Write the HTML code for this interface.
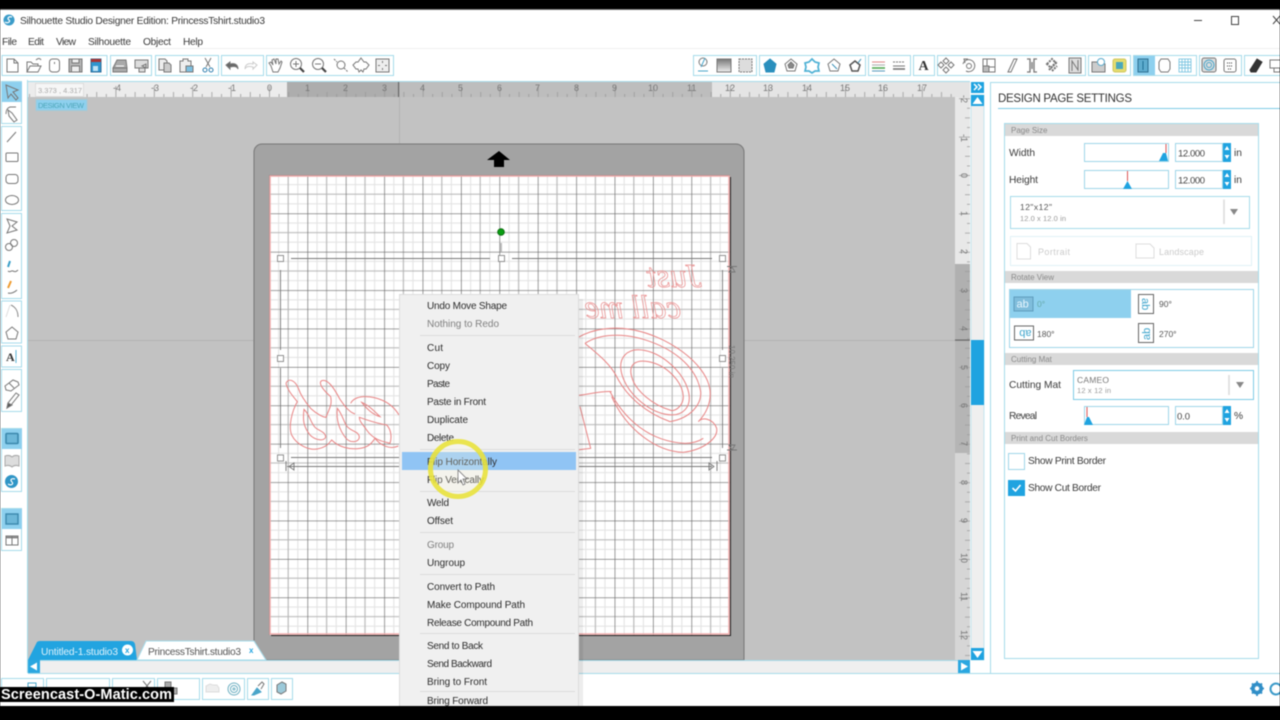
<!DOCTYPE html>
<html>
<head>
<meta charset="utf-8">
<title>Silhouette Studio</title>
<style>
html,body{margin:0;padding:0;background:#000;width:1280px;height:720px;overflow:hidden}
svg{display:block;position:absolute;left:0;top:0;filter:blur(.45px)}
text{font-family:"Liberation Sans",sans-serif;font-size:10.2px;fill:#3a3a3a}
.m text{font-size:10px;fill:#2c2c2c}
.i{fill:none;stroke:#777;stroke-width:1}
.b{fill:none;stroke:#a6dbea;stroke-width:1}
.h{fill:#d9d9d9}
.hd{font-size:8px;fill:#8a8a8a}
.rl{font-size:9px;fill:#777}
.art{fill:none;stroke:#e88484;stroke-width:3}
</style>
</head>
<body>
<svg width="1280" height="720" viewBox="0 0 1280 720" xmlns="http://www.w3.org/2000/svg">
<defs>
<pattern id="g" patternUnits="userSpaceOnUse" x="269" y="175" width="38.4" height="38.4">
<rect width="38.4" height="38.4" fill="#fff"/>
<path d="M9.6 0V38.4M28.8 0V38.4M0 9.6H38.4M0 28.8H38.4" stroke="#e2e2e2" stroke-width="1"/>
<path d="M19.2 0V38.4M0 19.2H38.4" stroke="#b4b4b4" stroke-width="1.100"/>
<path d="M0 0V38.4M0 0H38.4" stroke="#686868" stroke-width="1.300"/>
</pattern>
<pattern id="rt" patternUnits="userSpaceOnUse" x="269" y="82" width="38.4" height="15">
<path d="M.5 4V15M19.7 10V15M10.1 12V15M29.3 12V15" stroke="#999" stroke-width=".8"/>
</pattern>
<pattern id="rv" patternUnits="userSpaceOnUse" x="955" y="175" width="15" height="38.4">
<path d="M4 .5H15M10 19.7H15M12 10.1H15M12 29.3H15" stroke="#999" stroke-width=".8"/>
</pattern>
<linearGradient id="wg" x1="0" y1="0" x2="0" y2="1"><stop offset="0" stop-color="#777"/><stop offset="1" stop-color="#eee"/></linearGradient>
</defs>

<rect width="1280" height="720" fill="#000"/>
<rect y="9" width="1280" height="697" fill="#fff"/>
<rect y="9" width="1280" height="1" fill="#777"/>

<!-- title bar -->
<circle cx="9" cy="20" r="5.5" fill="#3b9cc9"/>
<path d="M5 22c3 2 6-1 4-2s-1-4 3-3" fill="none" stroke="#fff" stroke-width="1.2"/>
<text x="20" y="24" textLength="245">Silhouette Studio Designer Edition: PrincessTshirt.studio3</text>
<path d="M1194 20.5h8" stroke="#444"/>
<rect x="1231.5" y="16.5" width="7" height="8" fill="none" stroke="#444"/>
<path d="M1273 16l7 8M1280 16l-7 8" stroke="#444"/>
<text x="2" y="45" textLength="15">File</text>
<text x="28" y="45" textLength="16">Edit</text>
<text x="56" y="45" textLength="20">View</text>
<text x="88" y="45" textLength="43">Silhouette</text>
<text x="143" y="45" textLength="28">Object</text>
<text x="183" y="45" textLength="20">Help</text>
<rect y="48" width="1280" height="1" fill="#f0f0f0"/>

<!-- top toolbar groups -->
<g class="b">
<rect x="2" y="55.5" width="105" height="20"/><rect x="110.5" y="55.5" width="41" height="20"/><rect x="155.5" y="55.5" width="63" height="20"/><rect x="221.5" y="55.5" width="42" height="20"/><rect x="266.5" y="55.5" width="127" height="20"/>
<rect x="693.5" y="55.5" width="63" height="20"/><rect x="759.5" y="55.5" width="106" height="20"/><rect x="868.5" y="55.5" width="42" height="20"/><rect x="913.5" y="55.5" width="21" height="20"/><rect x="937.5" y="55.5" width="148" height="20"/><rect x="1088.5" y="55.5" width="42" height="20"/><rect x="1133.5" y="55.5" width="63" height="20"/><rect x="1199.5" y="55.5" width="42" height="20"/><rect x="1244.5" y="55.5" width="40" height="20"/>
</g>
<rect x="1134" y="56" width="21" height="19" fill="#8ed0ee"/>

<!-- left toolbar icons -->
<g class="i">
<path d="M7 59h7l4 4v9H7zM14 59v4h4"/>
<path d="M27 72V62h4l2 2h5v2M27 72l3-6h11l-3 6zM36 60c2-2 4-2 5 0"/>
<rect x="49.500" y="59" width="10" height="13" rx="3"/><path d="M54.500 62v2"/>
<rect x="69" y="59" width="13" height="13" fill="#b5b5b5"/><rect x="72" y="59" width="7" height="4" fill="#eee"/><rect x="71.500" y="66" width="8" height="6" fill="#eee"/>
<rect x="91" y="59" width="10" height="13" fill="#2f95cf" stroke="#2f6f99"/><rect x="91" y="59" width="10" height="3" fill="#a33" stroke="none"/><rect x="93" y="66" width="5" height="5" fill="#bfe3f5" stroke="none"/>
<path d="M113 68l4-8h9l1 8zM113 68v4h14v-4" fill="#aaa"/><path d="M116 66h8" stroke="#fff"/>
<path d="M135 60h13v8h-13zM139 68h6v4h-6zM142 66l4-2v4z" fill="#ddd"/>
<path d="M159 59h6l2 2v9h-8z" fill="#eee"/><path d="M164 63h5l2 2v7h-7z" fill="#ccc"/>
<path d="M180 61h3v-2h5v2h3v11h-11z" fill="#eee"/><rect x="186" y="66" width="7" height="6" fill="#7dbfe0"/>
<path d="M205 58l5 9M211 58l-5 9"/><circle cx="205" cy="70" r="2" stroke="#2f7fae"/><circle cx="211" cy="70" r="2" stroke="#2f7fae"/>
<path d="M226 65l4-3v2c4-1 8 0 8 5-1-3-4-3-8-2v2z" fill="#666"/>
<path d="M257 65l-4-3v2c-4-1-8 0-8 5 1-3 4-3 8-2v2z" stroke="#ccc"/>
<path d="M271 66l-2-3 2-1 2 3-1-5 2-1 2 5 0-5 2 0 1 5 2-3 1 1-2 6-2 4h-5z"/>
<circle cx="296" cy="64" r="5.500"/><path d="M293 64h6M296 61v6"/><path d="M300 68l4 4" stroke-width="2.200" stroke="#444"/>
<circle cx="318" cy="64" r="5.500"/><path d="M315 64h6"/><path d="M322 68l4 4" stroke-width="2.200" stroke="#444"/>
<circle cx="341" cy="65" r="4"/><path d="M334 59l3 3M344 68l4 4" stroke-dasharray="2 1"/>
<path d="M361 58l3 4h2l3 3-3 4h-2l-1 3-2-2-2 2-1-3h-2l-3-4 3-3h2z"/>
<rect x="376" y="59" width="13" height="13" fill="#eee"/><path d="M382.500 61v2M382.500 68v2M378 65.500h2M385 65.500h2"/>
</g>

<!-- right toolbar icons -->
<g class="i">
<circle cx="703" cy="62" r="4"/><path d="M701 67l4-9M698 71h10" stroke="#4aa5c9"/>
<rect x="717" y="59" width="14" height="13" fill="url(#wg)"/>
<rect x="739" y="59" width="13" height="13" stroke-dasharray="2 1" fill="#ddd"/>
<path d="M770 59l6 5-2 8h-8l-2-8z" fill="#2a8fbd" stroke="#2a8fbd"/>
<path d="M791 59l6 5-2 7h-8l-2-7z"/><path d="M791 62l3 3-1 3h-4l-1-3z" fill="#888"/>
<path d="M812 59l3 3 4 1-1 4 1 4-4 0-3 2-3-2-4 0 1-4-1-4 4-1z" stroke="#4fb2d5" stroke-width="1.700"/>
<path d="M834 59l6 5-2 7h-8l-2-7z"/><path d="M832 64l5 5" stroke="#3a8fb5"/>
<path d="M855 61l5 4-2 6h-6l-2-6z" stroke="#555" stroke-width="1.500"/><path d="M858 63l3-4" stroke="#3a8fb5"/>
<path d="M872 62h13" stroke="#d88"/><path d="M872 65h13" stroke="#aaa"/><path d="M872 68h13" stroke="#5a5" stroke-width="1.600"/><path d="M872 71h13" stroke="#59b"/>
<path d="M893 62h12" stroke-dasharray="2 1"/><path d="M893 66h12"/><path d="M893 69h12" stroke-width="1.600"/>
<path d="M946 58l3 3-3 3-3-3zM946 67l3 3-3 3-3-3zM941 62l3 3-3 3-3-3zM951 62l3 3-3 3-3-3z"/>
<path d="M963 64a6 6 0 1 1 3 7M968 59l-4 0 1 4"/><circle cx="969" cy="66" r="2.500"/>
<rect x="983" y="59" width="12" height="13"/><rect x="987" y="59" width="8" height="8"/><rect x="983" y="66" width="6" height="6" fill="#bbb"/>
<path d="M1008 72l6-13h3l-6 13z"/>
<path d="M1027 59h3v13h-3M1037 59h-3v13h3M1032 62v7" stroke-width="1.300"/>
<path d="M1049 70l8-9M1047 64l5-5 4 4-5 5zM1052 71l5-5" stroke-width="2" stroke-dasharray="2 1"/>
<rect x="1069" y="58" width="12" height="15" fill="#ddd"/><path d="M1072 71V61l6 9V60"/>
<path d="M1092 62h6l1 2h6v8h-13z" fill="#ccc"/><circle cx="1101" cy="62" r="3.500" fill="#fff" stroke="#5aa9cb"/>
<rect x="1113" y="59" width="13" height="13" rx="2" fill="#e5dc6e" stroke="#cfc760"/><rect x="1116" y="62" width="7" height="7" fill="#4aa8bb" stroke="none"/>
<path d="M1138 59h10v13h-10z" fill="#5eaccf" stroke="#2f6f90"/><path d="M1143 61v9" stroke="#1f6f95"/>
<path d="M1161 59h7l2 3v7l-2 3h-7l-2-3v-7z"/>
<g stroke="#7fc7e2" stroke-width=".9"><rect x="1179" y="59" width="12" height="13"/><path d="M1182 59v13M1185 59v13M1188 59v13M1179 62h12M1179 65h12M1179 68h12"/></g>
<rect x="1202" y="58" width="14" height="14" rx="2" fill="#ddd"/><circle cx="1209" cy="65" r="5" stroke="#4aa5c9"/><circle cx="1209" cy="65" r="2.500" stroke="#4aa5c9"/>
<rect x="1224" y="59" width="12" height="13" rx="2"/><path d="M1227 63h6M1227 66h6M1228 69h4" stroke-dasharray="1 1" stroke="#333"/>
<path d="M1250 70l7-11 5 3-6 10h-5z" fill="#333" stroke="#333"/>
<path d="M1270 60h12v8h-12zM1274 68h6v4h-6z"/>
</g>
<text x="918.500" y="70" style="font-family:'Liberation Serif',serif;font-size:14px;font-weight:bold;fill:#333">A</text>

<!-- side bar -->
<rect x="27" y="80" width="1" height="600" fill="#a6dbea"/>
<rect x="28" y="81" width="942" height="1" fill="#a6dbea"/>
<rect x="1.500" y="81.500" width="20" height="42" class="b"/>
<rect x="2" y="82" width="20" height="20" fill="#8ed0ee"/>
<rect x="1.500" y="126.500" width="20" height="84" class="b"/>
<rect x="1.500" y="213.500" width="20" height="85" class="b"/>
<rect x="1.500" y="301" width="20" height="42" class="b"/>
<rect x="1.500" y="346" width="20" height="21" class="b"/>
<rect x="1.500" y="369.500" width="20" height="42" class="b"/>
<rect x="1.500" y="428.500" width="20" height="63" class="b"/>
<rect x="2" y="429" width="20" height="20" fill="#8ed0ee"/>
<rect x="1.500" y="508.500" width="20" height="42" class="b"/>
<rect x="2" y="509" width="20" height="20" fill="#8ed0ee"/>
<g class="i">
<path d="M6 85l12 5-5 2 5 6-2 2-5-6-3 4z"/>
<path d="M6 114c0-4 1-6 4-7h6M8 110l4 3 5 7-3 2-5-6z"/>
<path d="M7 142l9-10"/>
<rect x="6" y="153" width="12" height="8.500" rx="1"/>
<rect x="6" y="174.500" width="12" height="9" rx="3"/>
<ellipse cx="12" cy="200" rx="6.500" ry="4.500"/>
<path d="M7 219l10 3-5 4 5 4-10 3 3-7z"/>
<circle cx="9" cy="247" r="3.500"/><circle cx="14" cy="243" r="3.500"/>
<path d="M8 271c2 2 3-1 5 0s3 1 5-1"/><path d="M10 261l-2 6" stroke="#3a9fc9" stroke-width="2"/>
<path d="M8 293c3 1 7-1 9-3"/><path d="M11 281l-3 7" stroke="#ee9b2f" stroke-width="2"/>
<path d="M11 305c4 2 7 5 7 12" stroke="#888"/><path d="M6 317l4-12" stroke="#ddd"/>
<path d="M12 327l6 5-2 7h-8l-2-7z"/>
<path d="M5 386l8-6 5 2 1 3-8 6-5-1z"/><path d="M9 383l5 5"/>
<path d="M7 408l1-5 8-10 3 2-8 10z"/><path d="M7 408l1-5 4 2z" fill="#555"/>
<rect x="6" y="433.500" width="12" height="10" rx="1" fill="#6db7d8" stroke="#3b88ad" stroke-width="1.600"/>
<path d="M5 456c3-1 5-1 7 1 2-2 4-2 7-1v10c-3-1-5-1-7 1-2-2-4-2-7-1z" fill="#ddd" stroke="#aaa"/>
<rect x="6" y="514" width="12" height="10" fill="#6db7d8" stroke="#3b88ad" stroke-width="1.400"/>
<rect x="6" y="536" width="12" height="9" /><path d="M12 536v9"/><path d="M6 537.500h12" stroke-width="1.600"/>
</g>
<text x="6" y="361" style="font-family:'Liberation Serif',serif;font-size:12px;font-weight:bold;fill:#333">A</text>
<path d="M16 350v13" stroke="#5ab4d6"/>
<circle cx="11.500" cy="481.500" r="6.500" fill="#2f95c6"/>
<path d="M8 484c3 2 6 0 4-2s-1-4 3-3" fill="none" stroke="#fff" stroke-width="1.200"/>

<!-- canvas -->
<rect x="28" y="82" width="942" height="578" fill="#c2c2c2"/>
<path d="M399.500 97V145M28 340.500H254M744 340.500H955" stroke="#b3b3b3" stroke-width="1"/>

<!-- top ruler -->
<rect x="28" y="82" width="942" height="15" fill="#ececec"/>
<rect x="287" y="82" width="111" height="15" fill="#adadad"/>
<rect x="398" y="82" width="314" height="15" fill="#bdbdbd"/>
<rect x="712" y="82" width="258" height="15" fill="#e4e4e4"/>
<rect x="28" y="82" width="927" height="15" fill="url(#rt)"/>
<rect x="398" y="82" width="1.200" height="15" fill="#666"/>
<g>
<text class="rl" x="113" y="91">-4</text><text class="rl" x="151" y="91">-3</text><text class="rl" x="190" y="91">-2</text><text class="rl" x="228" y="91">-1</text><text class="rl" x="267" y="91">0</text><text class="rl" x="305" y="91">1</text><text class="rl" x="343" y="91">2</text><text class="rl" x="382" y="91">3</text><text class="rl" x="420" y="91">4</text><text class="rl" x="458" y="91">5</text><text class="rl" x="497" y="91">6</text><text class="rl" x="535" y="91">7</text><text class="rl" x="574" y="91">8</text><text class="rl" x="612" y="91">9</text><text class="rl" x="648" y="91">10</text><text class="rl" x="687" y="91">11</text><text class="rl" x="725" y="91">12</text><text class="rl" x="763" y="91">13</text><text class="rl" x="802" y="91">14</text><text class="rl" x="840" y="91">15</text><text class="rl" x="878" y="91">16</text><text class="rl" x="917" y="91">17</text>
</g>
<rect x="35.500" y="83.500" width="48" height="13" fill="#f6f6f6" stroke="#ddd"/>
<text x="38" y="93" style="font-size:7.500px;fill:#aaa" textLength="44">3.373 , 4.317</text>
<rect x="36" y="99.500" width="51" height="11" fill="#8ed0ee" stroke="#a6c9d6"/>
<text x="38" y="108" style="font-size:7.500px;fill:#4da6b8" textLength="46">DESIGN VIEW</text>

<!-- right ruler -->
<rect x="955" y="97" width="15" height="563" fill="#e8e8e8"/>
<rect x="955" y="264" width="15" height="76" fill="#b0b0b0"/>
<rect x="955" y="340" width="15" height="113" fill="#b5b5b5"/>
<rect x="955" y="453" width="15" height="207" fill="#d6d6d6"/>
<rect x="955" y="97" width="15" height="563" fill="url(#rv)"/>
<rect x="955" y="339.500" width="15" height="1.200" fill="#666"/>
<g>
<text class="rl" transform="translate(961 95) rotate(90)">-2</text><text class="rl" transform="translate(961 134) rotate(90)">-1</text><text class="rl" transform="translate(961 173) rotate(90)">0</text><text class="rl" transform="translate(961 211) rotate(90)">1</text><text class="rl" transform="translate(961 249) rotate(90)">2</text><text class="rl" transform="translate(961 288) rotate(90)">3</text><text class="rl" transform="translate(961 326) rotate(90)">4</text><text class="rl" transform="translate(961 365) rotate(90)">5</text><text class="rl" transform="translate(961 403) rotate(90)">6</text><text class="rl" transform="translate(961 441) rotate(90)">7</text><text class="rl" transform="translate(961 480) rotate(90)">8</text><text class="rl" transform="translate(961 518) rotate(90)">9</text><text class="rl" transform="translate(961 553) rotate(90)">10</text><text class="rl" transform="translate(961 592) rotate(90)">11</text><text class="rl" transform="translate(961 630) rotate(90)">12</text>
</g>

<!-- mat -->
<path d="M254 660V152a8 8 0 0 1 8-8H736a8 8 0 0 1 8 8V660z" fill="#a3a3a3" stroke="#767676"/>
<path d="M499 151l11 9h-6v7h-10v-7h-7z" fill="#000"/>
<rect x="271" y="177" width="460" height="459" fill="#222"/>
<rect x="269" y="175" width="461" height="460" fill="url(#g)"/>
<rect x="270" y="176" width="459" height="458" fill="none" stroke="#f0aaaa" stroke-width="1.500"/>

<!-- artwork left -->
<g class="art" transform="translate(260 340) scale(.3333)">
<path d="M78 130C85 113 105 120 115 145C122 165 135 185 152 205C170 222 190 232 198 232C208 205 217 195 212 170C195 155 172 130 185 122C205 115 225 150 240 178C252 195 265 215 285 222"/>
<path d="M78 130C82 150 100 170 112 185C95 215 85 260 95 285C110 315 150 335 180 325C205 318 210 305 215 300C235 320 265 330 300 325C325 322 335 310 345 295C360 315 390 330 415 318"/>
<path d="M132 208C128 240 130 260 150 285C165 300 190 305 197 292C197 275 175 272 165 262C150 245 150 225 132 208Z"/>
<path d="M232 205C228 240 238 270 258 295C272 310 298 308 298 290C295 272 270 275 258 255C250 240 245 220 232 205Z"/>
<path d="M272 190C285 165 330 165 365 180C390 190 405 205 417 225"/>
<path d="M305 187C325 195 345 215 360 230C340 225 318 205 305 187Z"/>
<path d="M298 232C320 240 350 250 380 255C395 270 395 295 390 310C370 305 340 300 320 270C310 255 298 245 298 232Z"/>
</g>
<!-- artwork right -->
<g class="art" transform="translate(570 250) scale(.3333)">
<path d="M25 262C70 235 130 230 180 238C290 255 410 340 420 420C425 460 405 495 385 515C395 500 430 505 440 535C445 565 400 600 340 607C260 605 170 540 125 440"/>
<path d="M125 425C100 422 60 432 25 436"/>
<path d="M45 280C90 250 160 250 220 268C310 295 380 350 392 425C395 465 360 505 300 515"/>
<path d="M45 280C80 310 120 340 140 380C170 440 230 490 300 515"/>
<ellipse cx="255" cy="397" rx="122" ry="72" transform="rotate(42 255 397)"/>
<path d="M305 482C320 482 340 465 340 440C338 395 290 345 235 335C195 328 175 345 185 380C195 420 245 465 305 482Z"/>
<path d="M120 425C165 510 240 575 345 580C365 580 385 575 400 565"/>
<path d="M30 470L62 595L20 600"/>
</g>
<text transform="translate(702 287) scale(-1 1)" style="font-family:'Liberation Serif',serif;font-style:italic;font-size:34px;fill:none;stroke:#ea8c8c;stroke-width:.7">Just</text>
<text transform="translate(681 318) scale(-1 1)" style="font-family:'Liberation Serif',serif;font-style:italic;font-size:33px;fill:none;stroke:#ea8c8c;stroke-width:.7">call me</text>

<!-- selection -->
<g fill="none" stroke="#777" stroke-width=".9">
<path d="M291 258.500H490M512 258.500H712M280.500 270V350M280.500 368V448M722.500 270V350M722.500 368V448M291 457.500H712M287 466.500H712"/>
<path d="M501 243V252" stroke="#bbb" stroke-width="2"/>
<g fill="#fff" stroke="#888"><rect x="277.500" y="255.500" width="6" height="6"/><rect x="498.500" y="255.500" width="6" height="6"/><rect x="719.500" y="255.500" width="6" height="6"/><rect x="277.500" y="355.500" width="6" height="6"/><rect x="719.500" y="355.500" width="6" height="6"/><rect x="277.500" y="455" width="6" height="6"/><rect x="719.500" y="455" width="6" height="6"/></g>
<path d="M286 461V471M289 466.500l5-3.500v7zM717 461V471M714 466.500l-5-3.500v7zM727 266.500H737M732 267l-3 5h6zM727 450H737M732 450l-3-5h6z"/>
</g>
<circle cx="501" cy="232" r="3.300" fill="#0a9e12" stroke="#0b6e10"/>
<text transform="translate(729 345) rotate(90)" style="font-size:8px;fill:#777">10.250 in</text>

<!-- bottom scrollbar -->
<rect x="28" y="660" width="942" height="13" fill="#efefef"/>
<path d="M28 660.500H970" stroke="#a6dbea"/>
<rect x="28" y="660" width="12" height="13" fill="#2aa7e0"/>
<path d="M30 666.500l7-4v8z" fill="#fff"/>
<rect x="958" y="660" width="12" height="13" fill="#2aa7e0"/>
<path d="M968 666.500l-7-4v8z" fill="#fff"/>
<rect x="0" y="673" width="990" height="33" fill="#fff"/>
<path d="M28 673.500H990" stroke="#a6dbea"/>

<!-- context menu -->
<rect x="403" y="299" width="180" height="407" fill="#000" opacity=".07"/>
<rect x="399.500" y="294.500" width="179" height="412" fill="#f0f0f0" stroke="#dcdcdc"/>
<rect x="402" y="452" width="174" height="18" fill="#90c4f4"/>
<path d="M420 335.500H575M420 449.500H575M420 491.500H575M420 532.500H575M420 574.500H575M420 633.500H575M420 691.500H575" stroke="#dcdcdc"/>
<g class="m">
<text x="427" y="309" textLength="80">Undo Move Shape</text>
<text x="427" y="327" textLength="72" style="fill:#808080">Nothing to Redo</text>
<text x="427" y="351" textLength="16">Cut</text>
<text x="427" y="369" textLength="23">Copy</text>
<text x="427" y="387" textLength="23">Paste</text>
<text x="427" y="405" textLength="59">Paste in Front</text>
<text x="427" y="423" textLength="41">Duplicate</text>
<text x="427" y="441" textLength="27">Delete</text>
<text x="427" y="465" textLength="70">Flip Horizontally</text>
<text x="427" y="483" textLength="57">Flip Vertically</text>
<text x="427" y="506" textLength="22">Weld</text>
<text x="427" y="524" textLength="26">Offset</text>
<text x="427" y="548" textLength="27" style="fill:#808080">Group</text>
<text x="427" y="566" textLength="38">Ungroup</text>
<text x="427" y="590" textLength="68">Convert to Path</text>
<text x="427" y="608" textLength="98">Make Compound Path</text>
<text x="427" y="626" textLength="106">Release Compound Path</text>
<text x="427" y="649" textLength="56">Send to Back</text>
<text x="427" y="667" textLength="65">Send Backward</text>
<text x="427" y="685" textLength="60">Bring to Front</text>
<text x="427" y="704" textLength="61">Bring Forward</text>
</g>
<!-- highlighter -->
<circle cx="458" cy="469" r="25" fill="#fffde0" opacity=".25"/>
<circle cx="458" cy="469" r="27.500" fill="none" stroke="#e9e23c" stroke-width="5" opacity=".9"/>
<path d="M458 470v13l3-3 2 5 2-1-2-5h4z" fill="#fff" stroke="#777" stroke-width=".8"/>

<!-- tabs -->
<path d="M28 660L37 642q1-1 3-1h91q3 0 4 3l2 16z" fill="#22a4e0"/>
<text x="41" y="655" style="fill:#dff2fb" textLength="77">Untitled-1.studio3</text>
<circle cx="127.500" cy="650" r="5.500" fill="#fff"/>
<text x="125" y="653" style="font-size:8px;font-weight:bold;fill:#22a4e0">x</text>
<path d="M137 660L146 641H254L266 660z" fill="#fff" stroke="#a6dbea"/>
<text x="148" y="655" style="fill:#555" textLength="93">PrincessTshirt.studio3</text>
<text x="249" y="653" style="font-size:8px;font-weight:bold;fill:#22a4e0">x</text>

<!-- right scrollbar -->
<rect x="971" y="82" width="13" height="11" fill="#1fa3e0"/>
<path d="M974 84l3 3-3 3M978 84l3 3-3 3" fill="none" stroke="#fff" stroke-width="1.500"/>
<rect x="971" y="95" width="13" height="565" fill="#efefef" stroke="#a6dbea" stroke-width=".6"/>
<rect x="971" y="95" width="13" height="11" fill="#1fa3e0"/>
<path d="M977.500 97l5 7h-10z" fill="#fff"/>
<rect x="971" y="340" width="13" height="65" fill="#1fa3e0"/>
<rect x="971" y="648" width="13" height="12" fill="#1fa3e0"/>
<path d="M977.500 658l5-7h-10z" fill="#fff"/>

<!-- right panel -->
<rect x="990" y="82" width="290" height="591" fill="#fff"/>
<path d="M990.500 82V673M990 82.500H1280M990 673.500H1280" stroke="#a6dbea"/>
<text x="998" y="102" style="font-size:11.500px;fill:#333" textLength="134">DESIGN PAGE SETTINGS</text>
<path d="M998 108.500H1280" stroke="#7fcbe6"/>
<rect x="1004.500" y="123.500" width="254" height="535" fill="#fff" stroke="#a6dbea"/>
<rect x="1005" y="124" width="253" height="12" class="h"/>
<rect x="1005" y="271" width="253" height="12" class="h"/>
<rect x="1005" y="353" width="253" height="12" class="h"/>
<rect x="1005" y="432" width="253" height="12" class="h"/>
<text class="hd" x="1011" y="133">Page Size</text>
<text class="hd" x="1011" y="280">Rotate View</text>
<text class="hd" x="1011" y="362">Cutting Mat</text>
<text class="hd" x="1011" y="441">Print and Cut Borders</text>

<text x="1009" y="156" textLength="26">Width</text>
<text x="1009" y="183" textLength="29">Height</text>
<g fill="#fff" stroke="#9fd6e8">
<rect x="1084.500" y="143.500" width="84" height="18"/>
<rect x="1084.500" y="170.500" width="84" height="18"/>
<rect x="1084.500" y="406.500" width="84" height="18"/>
<rect x="1175.500" y="143.500" width="47" height="18"/>
<rect x="1175.500" y="170.500" width="47" height="18"/>
<rect x="1175.500" y="406.500" width="47" height="18"/>
</g>
<g fill="#1fa3e0">
<rect x="1223" y="143" width="8" height="19"/><rect x="1223" y="170" width="8" height="19"/><rect x="1223" y="406" width="8" height="19"/>
<path d="M1168 161h-9l4-8h3zM1132 189h-9l4.500-8zM1093 425h-9l3-8h2z"/>
</g>
<path d="M1166 144V153M1127.500 171V181M1087 407V417" stroke="#dd5555"/>
<g fill="#fff">
<path d="M1227 146l2.500 4h-5zM1227 159l2.500-4h-5zM1227 173l2.500 4h-5zM1227 186l2.500-4h-5zM1227 409l2.500 4h-5zM1227 422l2.500-4h-5z"/>
</g>
<text x="1178" y="156.500" style="font-size:9.500px;fill:#444" textLength="27">12.000</text>
<text x="1178" y="183.500" style="font-size:9.500px;fill:#444" textLength="27">12.000</text>
<text x="1177" y="419.500" style="font-size:9.500px;fill:#444" textLength="13">0.0</text>
<text x="1234" y="156">in</text><text x="1234" y="183">in</text><text x="1234" y="419">%</text>

<rect x="1010.500" y="196.500" width="239" height="32" fill="#fff" stroke="#a6dbea"/>
<text x="1020" y="210" style="font-size:8.500px;fill:#555" textLength="32">12"x12"</text>
<text x="1020" y="221" style="font-size:7.500px;fill:#999" textLength="46">12.0 x 12.0 in</text>
<path d="M1224 199.500V224" stroke="#e3e3e3" stroke-width="2"/>
<path d="M1230 209h8l-4 6z" fill="#888"/>

<rect x="1010.500" y="236.500" width="241" height="29" fill="#fff" stroke="#e1f2f7"/>
<path d="M1017 243.500h10l3.500 3.500v12h-13.500z" fill="none" stroke="#ddd"/>
<text x="1038" y="255" style="font-size:9px;fill:#cbcbcb" textLength="32">Portrait</text>
<path d="M1136 244h14l4 4v10h-18z" fill="none" stroke="#ddd"/>
<text x="1159" y="255" style="font-size:9px;fill:#cbcbcb" textLength="45">Landscape</text>

<rect x="1009.500" y="289.500" width="244" height="58" fill="#fff" stroke="#9fd6e8"/>
<rect x="1010" y="290" width="121" height="28" fill="#8ed0ee"/>
<rect x="1014" y="297" width="19" height="14" fill="#7fbddc" stroke="#5f9dbd"/>
<text x="1016.500" y="307.500" style="font-size:11px;fill:#e9f7ff">ab</text>
<text x="1037" y="307" style="font-size:8.500px;fill:#6aa">0°</text>
<rect x="1138.500" y="294.500" width="15" height="19" fill="#fff" stroke="#666"/>
<text transform="translate(1142 298) rotate(90)" style="font-size:11px;fill:#3fa5cc">ab</text>
<text x="1159" y="307" style="font-size:8.500px;fill:#555">90°</text>
<rect x="1014.500" y="326" width="19" height="14" fill="#fff" stroke="#666"/>
<text transform="translate(1031.500 330) rotate(180)" style="font-size:11px;fill:#3fa5cc">ab</text>
<text x="1037" y="337" style="font-size:8.500px;fill:#555">180°</text>
<rect x="1138.500" y="323.500" width="15" height="19" fill="#fff" stroke="#666"/>
<text transform="translate(1150 340) rotate(-90)" style="font-size:11px;fill:#3fa5cc">ab</text>
<text x="1159" y="337" style="font-size:8.500px;fill:#555">270°</text>

<text x="1009" y="388" textLength="52">Cutting Mat</text>
<rect x="1073.500" y="370.500" width="180" height="29" fill="#fff" stroke="#7fcbe6"/>
<text x="1077" y="383" style="font-size:8.500px;fill:#777" textLength="32">CAMEO</text>
<text x="1077" y="393" style="font-size:7.500px;fill:#999" textLength="34">12 x 12 in</text>
<path d="M1229 375V395" stroke="#e3e3e3" stroke-width="2"/>
<path d="M1236 382h8l-4 6z" fill="#888"/>
<text x="1009" y="419" textLength="28">Reveal</text>

<rect x="1008.500" y="453.500" width="16" height="16" fill="#fff" stroke="#9fd6e8"/>
<text x="1028" y="464" textLength="78">Show Print Border</text>
<rect x="1008" y="480" width="17" height="16" fill="#1fa3e0"/>
<path d="M1012.500 488l3 3 5-6" fill="none" stroke="#fff" stroke-width="1.600"/>
<text x="1028" y="491" textLength="73">Show Cut Border</text>

<!-- bottom toolbar -->
<g class="b">
<rect x="1.500" y="678.500" width="42" height="21"/><rect x="46.500" y="678.500" width="63" height="21"/><rect x="112.500" y="678.500" width="42" height="21"/><rect x="157.500" y="678.500" width="42" height="21"/><rect x="202.500" y="678.500" width="42" height="21"/><rect x="247.500" y="678.500" width="21" height="21"/><rect x="271.500" y="678.500" width="21" height="21"/>
</g>
<g class="i">
<path d="M206 692v-6l4-2 3 1 4 0 2 3v4z" stroke="#ddd" fill="#eee"/>
<circle cx="234" cy="689" r="6" stroke="#6fb0c2"/><circle cx="234" cy="689" r="3.500" stroke="#6fb0c2"/><circle cx="234" cy="689" r="1" stroke="#6fb0c2"/>
<path d="M252 695l5-7 4 4-7 3z" fill="#4aa5c9" stroke="#4aa5c9"/><path d="M258 686l4-4 2 2-3 5"/>
<path d="M277 692v-7l5-3 4 2v7l-5 3z" fill="#9cc9d9"/>
<path d="M165 682h6v6h-6zM171 688h6v6h-6z" fill="#aaa"/>
<path d="M28 683h8v4h-8z" stroke="#4aa5c9"/><path d="M143 681l5 6M151 681l-5 6"/>
</g>
<!-- gear -->
<circle cx="1257" cy="688.500" r="4.500" fill="none" stroke="#2f8ec7" stroke-width="3"/>
<path d="M1257 681v15M1250 688.500h14M1252 683.500l10 10M1262 683.500l-10 10" stroke="#2f8ec7" stroke-width="1.800"/>
<circle cx="1257" cy="688.500" r="2.200" fill="#fff"/>
<circle cx="1276" cy="689" r="5.500" fill="none" stroke="#3c9ac9" stroke-width="2"/>

<!-- watermark -->
<rect x="0" y="687" width="174" height="15" fill="#000"/>
<text x="1" y="699" style="font-size:14.500px;font-weight:bold;fill:#fff" textLength="171">Screencast-O-Matic.com</text>

<rect y="706" width="1280" height="14" fill="#000"/>
</svg>
</body>
</html>
